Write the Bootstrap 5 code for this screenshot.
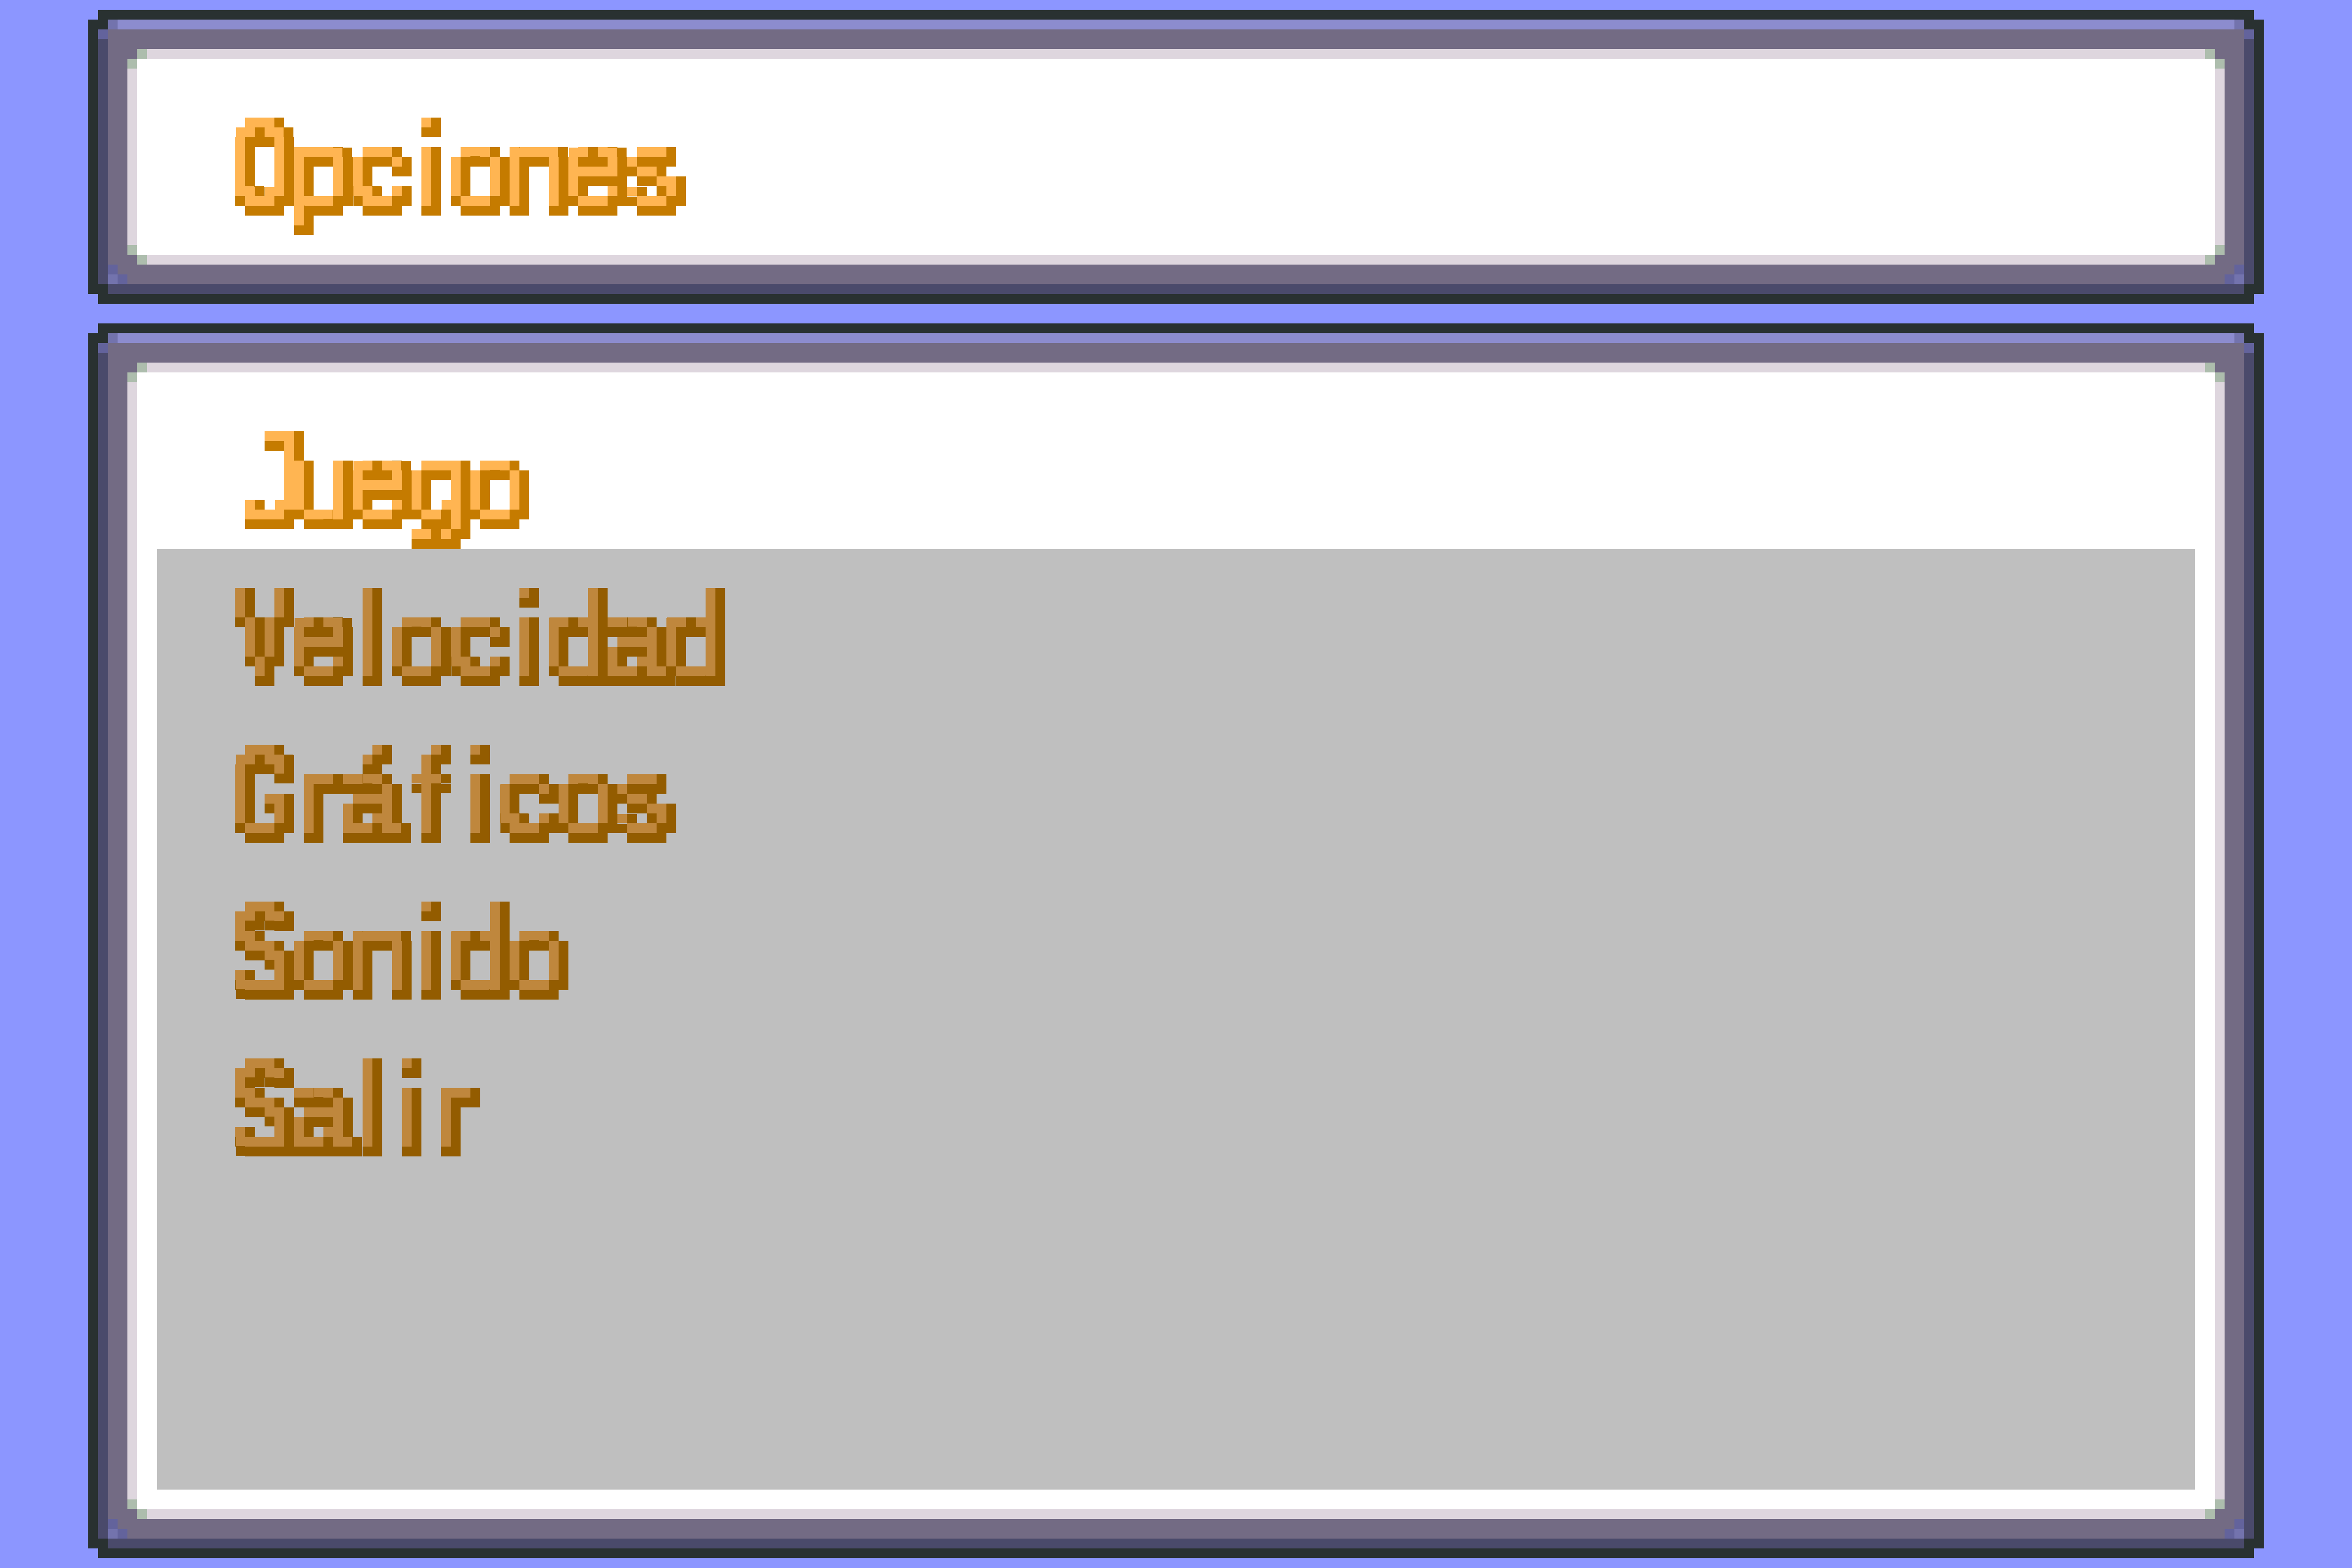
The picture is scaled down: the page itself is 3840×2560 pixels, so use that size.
<!DOCTYPE html>
<html lang="es">
<head>
<meta charset="utf-8">
<title>Opciones</title>
<link href="https://cdn.jsdelivr.net/npm/bootstrap@5.3.0/dist/css/bootstrap.min.css" rel="stylesheet">
<style>
html,body{margin:0;height:2560px;overflow:hidden;background:#8c96ff}
.scr{padding:16px 144px;gap:32px}
.frm{border:16px solid #293131;position:relative}
.rg2{border:16px solid #4a4a6b;border-top-color:#8c8cce}
.rg3{border:32px solid #736b84}
.rg4{border:16px solid #ded6de;background:#fff;position:relative;padding:96px 0 0 160px}
.hd{height:352px}
.bd{height:1888px}
.lnx{width:832px;height:256px;line-height:160px;font-family:"Liberation Sans",sans-serif;font-size:185px;white-space:nowrap;filter:url(#pxl)}
.gl{display:inline-flex;justify-content:center;width:80px;margin-right:16px;line-height:100px;transform:scaleX(.92)}
.gc{font-size:201px;-webkit-text-stroke:6px #000}
.go{transform:scaleX(.58)}
.gg{-webkit-text-stroke:3px #000;transform:scaleX(.6)}
.gs{-webkit-text-stroke:3px #000;transform:scaleX(.74)}
.gv{transform:scaleX(.6)}
.gj{font-size:201px;letter-spacing:-24px;transform:translateX(5px) scaleX(1.07)}
.ge{-webkit-text-stroke:2px #000;transform:translateY(-2px) scaleX(.92)}
.gf{font-size:190px;transform:scaleX(1.1)}
.gi{width:16px;margin:0 32px 0 16px;font-size:195px}
.gr{width:64px}
.gt{font-size:190px}
.dim{position:absolute;top:288px;left:32px;right:32px;bottom:32px;background:rgba(0,0,0,.25)}
.cnr{position:absolute;width:96px;height:96px;display:block;z-index:2}
.ctl{top:-16px;left:-16px}
.ctr{top:-16px;right:-16px;transform:scaleX(-1)}
.cbl{bottom:-16px;left:-16px}
.cbr{bottom:-16px;right:-16px;transform:scaleX(-1)}
.k{fill:#293131}.n{fill:#4a4a6b}.p{fill:#736b84}.s{fill:#adbdad}.w{fill:#fff}.b{fill:#8c96ff}.v{fill:#8c8cce}.m{fill:#7373ad}.q{fill:#63639c}
.defs{position:absolute;width:0;height:0}
</style>
</head>
<body>
<svg class="defs" aria-hidden="true">
<defs>
<filter id="pxl" x="0" y="0" width="100%" height="100%" primitiveUnits="userSpaceOnUse" color-interpolation-filters="sRGB">
<feFlood x="7" y="7" width="2" height="2" flood-color="#000" result="dot"/>
<feComposite in="dot" in2="dot" x="0" y="0" width="16" height="16" result="cell"/>
<feTile in="cell" result="grid"/>
<feComposite in="SourceGraphic" in2="grid" operator="in" result="smp"/>
<feMorphology in="smp" operator="dilate" radius="7" result="blk"/>
<feComponentTransfer in="blk" result="mask"><feFuncA type="discrete" tableValues="0 1"/></feComponentTransfer>
<feFlood flood-color="#ffb552"/>
<feComposite in2="mask" operator="in" result="lit"/>
<feFlood flood-color="#c57b00"/>
<feComposite in2="mask" operator="in" result="drk"/>
<feOffset in="drk" dx="16" dy="0" result="d1"/>
<feOffset in="drk" dx="0" dy="16" result="d2"/>
<feOffset in="drk" dx="16" dy="16" result="d3"/>
<feMerge><feMergeNode in="d1"/><feMergeNode in="d2"/><feMergeNode in="d3"/><feMergeNode in="lit"/></feMerge>
</filter>
<symbol id="tl" viewBox="0 0 6 6" shape-rendering="crispEdges">
<rect class="b" x="0" y="0" width="1" height="1"/><rect class="k" x="1" y="0" width="5" height="1"/>
<rect class="k" x="0" y="1" width="2" height="1"/><rect class="m" x="2" y="1" width="1" height="1"/><rect class="v" x="3" y="1" width="3" height="1"/>
<rect class="k" x="0" y="2" width="1" height="4"/><rect class="q" x="1" y="2" width="1" height="1"/><rect class="p" x="2" y="2" width="4" height="2"/>
<rect class="n" x="1" y="3" width="1" height="3"/>
<rect class="p" x="2" y="4" width="3" height="1"/><rect class="s" x="5" y="4" width="1" height="1"/>
<rect class="p" x="2" y="5" width="2" height="1"/><rect class="s" x="4" y="5" width="1" height="1"/><rect class="w" x="5" y="5" width="1" height="1"/>
</symbol>
<symbol id="bl" viewBox="0 0 6 6" shape-rendering="crispEdges">
<rect class="k" x="0" y="0" width="1" height="5"/><rect class="n" x="1" y="0" width="1" height="4"/>
<rect class="p" x="2" y="0" width="2" height="1"/><rect class="s" x="4" y="0" width="1" height="1"/><rect class="w" x="5" y="0" width="1" height="1"/>
<rect class="p" x="2" y="1" width="3" height="1"/><rect class="s" x="5" y="1" width="1" height="1"/>
<rect class="q" x="2" y="2" width="1" height="1"/><rect class="p" x="3" y="2" width="3" height="1"/>
<rect class="m" x="2" y="3" width="1" height="1"/><rect class="q" x="3" y="3" width="1" height="1"/><rect class="p" x="4" y="3" width="2" height="1"/>
<rect class="k" x="1" y="4" width="1" height="1"/><rect class="n" x="2" y="4" width="4" height="1"/>
<rect class="b" x="0" y="5" width="1" height="1"/><rect class="k" x="1" y="5" width="5" height="1"/>
</symbol>
</defs>
</svg>
<main class="scr d-flex flex-column">
<section class="frm">
<svg class="cnr ctl"><use href="#tl"/></svg><svg class="cnr ctr"><use href="#tl"/></svg><svg class="cnr cbl"><use href="#bl"/></svg><svg class="cnr cbr"><use href="#bl"/></svg>
<div class="rg2"><div class="rg3"><div class="rg4 hd">
<div class="lnx"><span class="gl gc go">O</span><span class="gl">p</span><span class="gl">c</span><span class="gl gi">i</span><span class="gl">o</span><span class="gl">n</span><span class="gl ge">e</span><span class="gl">s</span></div>
</div></div></div>
</section>
<section class="frm">
<svg class="cnr ctl"><use href="#tl"/></svg><svg class="cnr ctr"><use href="#tl"/></svg><svg class="cnr cbl"><use href="#bl"/></svg><svg class="cnr cbr"><use href="#bl"/></svg>
<div class="rg2"><div class="rg3"><div class="rg4 bd">
<div class="lnx"><span class="gl gj">J</span><span class="gl">u</span><span class="gl ge">e</span><span class="gl">g</span><span class="gl">o</span></div>
<div class="lnx"><span class="gl gc gv">V</span><span class="gl ge">e</span><span class="gl gi">l</span><span class="gl">o</span><span class="gl">c</span><span class="gl gi">i</span><span class="gl gt">d</span><span class="gl ge">a</span><span class="gl gt">d</span></div>
<div class="lnx"><span class="gl gc gg">G</span><span class="gl gr">r</span><span class="gl ge">á</span><span class="gl gf">f</span><span class="gl gi">i</span><span class="gl">c</span><span class="gl">o</span><span class="gl">s</span></div>
<div class="lnx"><span class="gl gc gs">S</span><span class="gl">o</span><span class="gl">n</span><span class="gl gi">i</span><span class="gl gt">d</span><span class="gl">o</span></div>
<div class="lnx"><span class="gl gc gs">S</span><span class="gl ge">a</span><span class="gl gi">l</span><span class="gl gi">i</span><span class="gl gr">r</span></div>
<div class="dim"></div>
</div></div></div>
</section>
</main>
<script src="https://cdn.jsdelivr.net/npm/bootstrap@5.3.0/dist/js/bootstrap.bundle.min.js"></script>
</body>
</html>
